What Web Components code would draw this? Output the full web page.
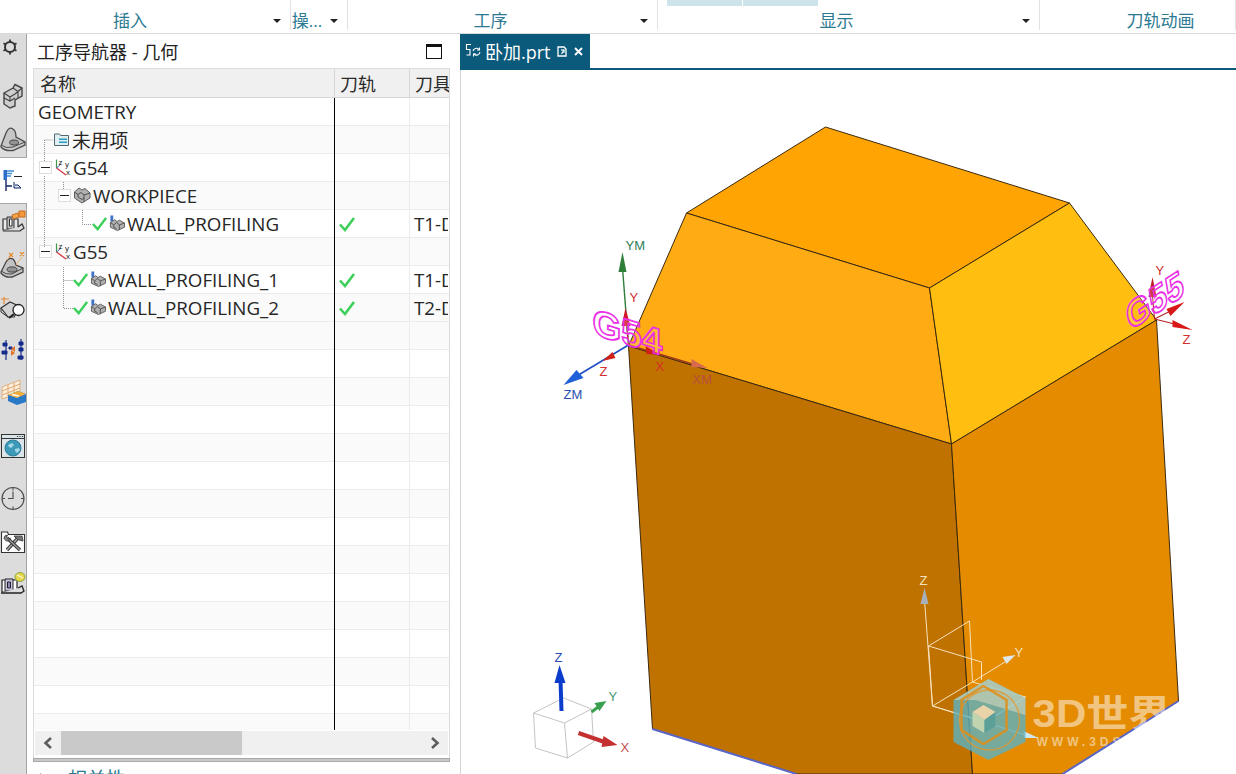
<!DOCTYPE html>
<html lang="zh">
<head>
<meta charset="utf-8">
<title>NX</title>
<style>
html, body { margin: 0; padding: 0; height: 100%; overflow: hidden; background: #fff; }
body { font-family: "Open Sans", "Noto Sans CJK SC", sans-serif; }
</style>
</head>
<body>
<nx-app>
    <nx-ribbon slot="ribbon">
        <nx-ribbon-group width="291" shift="-30" arrow>插入</nx-ribbon-group>
        <nx-ribbon-group width="57" shift="-24" arrow>操...</nx-ribbon-group>
        <nx-ribbon-group width="310" shift="-24" arrow>工序</nx-ribbon-group>
        <nx-ribbon-group width="382" shift="-24" arrow>
            <nx-gallery-chip slot="gallery"></nx-gallery-chip>
            <nx-gallery-chip slot="gallery"></nx-gallery-chip>
            显示
        </nx-ribbon-group>
        <nx-ribbon-group width="196" shift="46">刀轨动画</nx-ribbon-group>
    </nx-ribbon>

    <nx-rail slot="rail">
        <nx-rail-item icon="gear"></nx-rail-item>
        <nx-rail-item icon="solid" gap="23"></nx-rail-item>
        <nx-rail-item icon="bracket" gap="17"></nx-rail-item>
        <nx-rail-item icon="nav" gap="6" selected></nx-rail-item>
        <nx-rail-item icon="machine" gap="6"></nx-rail-item>
        <nx-rail-item icon="partops" gap="17"></nx-rail-item>
        <nx-rail-item icon="magnify" gap="17"></nx-rail-item>
        <nx-rail-item icon="swap" gap="16"></nx-rail-item>
        <nx-rail-item icon="table" gap="16"></nx-rail-item>
        <nx-rail-item icon="globe" gap="28"></nx-rail-item>
        <nx-rail-item icon="clock" gap="27"></nx-rail-item>
        <nx-rail-item icon="tools" gap="17"></nx-rail-item>
        <nx-rail-item icon="machine2" gap="16"></nx-rail-item>
    </nx-rail>

    <nx-navigator slot="panel" heading="工序导航器 - 几何" footer="相关性">
        <nx-row indent="4">GEOMETRY</nx-row>
        <nx-row indent="19" alt><nx-icon name="folder" size="17"></nx-icon>未用项</nx-row>
        <nx-row indent="5"><nx-expander></nx-expander><nx-icon name="csys" size="17"></nx-icon>G54</nx-row>
        <nx-row indent="24" alt><nx-expander></nx-expander><nx-icon name="block" size="18"></nx-icon>WORKPIECE</nx-row>
        <nx-row indent="58"><nx-icon name="check" size="15"></nx-icon><nx-icon name="op" size="16"></nx-icon>WALL_PROFILING<nx-icon slot="path" name="check" size="16"></nx-icon><span slot="tool">T1-D</span></nx-row>
        <nx-row indent="5" alt><nx-expander></nx-expander><nx-icon name="csys" size="17"></nx-icon>G55</nx-row>
        <nx-row indent="39"><nx-icon name="check" size="15"></nx-icon><nx-icon name="op" size="16"></nx-icon>WALL_PROFILING_1<nx-icon slot="path" name="check" size="16"></nx-icon><span slot="tool">T1-D</span></nx-row>
        <nx-row indent="39" alt><nx-icon name="check" size="15"></nx-icon><nx-icon name="op" size="16"></nx-icon>WALL_PROFILING_2<nx-icon slot="path" name="check" size="16"></nx-icon><span slot="tool">T2-D</span></nx-row>
    </nx-navigator>

    <nx-viewport slot="view" title-text="卧加.prt"></nx-viewport>
</nx-app>

<script>
const ICONS = {
    check: '<svg viewBox="0 0 16 16"><path d="M1 8.5 L6 14 L15 2" fill="none" stroke="#3ccf5a" stroke-width="2.6"/></svg>',
    folder: '<svg viewBox="0 0 17 17"><path d="M1.5 3h5l1 1.5h8v10h-14z" fill="#dff0f5" stroke="#56666e"/><path d="M6 7.5h8v1.6H6zM6 10.5h8v1.6H6z" fill="#2d9cc2"/></svg>',
    csys: '<svg viewBox="0 0 17 17"><path d="M2.5 0.5 V9" stroke="#3c9a4a" stroke-width="1.2" fill="none"/><path d="M2.5 9 L12 16" stroke="#d8364a" stroke-width="1.3" fill="none"/><path d="M2.5 9 L7 5" stroke="#4060c0" fill="none"/><text x="4.5" y="5.5" font-size="8" font-family="Liberation Sans" fill="#222">z</text><text x="11" y="8" font-size="8" font-family="Liberation Sans" fill="#222">y</text><text x="12" y="15.5" font-size="8" font-family="Liberation Sans" fill="#222">x</text></svg>',
    block: '<svg viewBox="0 0 18 18"><path d="M1.5 6 L6 2 L9 4 L12 2.5 L17 7 V12 L9 17 L1.5 12Z" fill="#b0b0b0" stroke="#5e5e5e"/><path d="M1.5 6 L5 8.5 L8 6.5 L11 9 L17 7 M11 9 V16 M5 8.5 V11 L9 13.5 L11 12" fill="none" stroke="#505050"/></svg>',
    op: '<svg viewBox="0 0 17 17"><path d="M1.5 0.5 h3 v6.5 h-3z" fill="#3f74c8"/><path d="M3 7 v2" stroke="#333"/><path d="M1.5 8 L6 5 L8.5 7 L11 5.5 L16.5 8.5 V13 L9 16.5 L1.5 13Z" fill="#b0b0b0" stroke="#5e5e5e"/><path d="M1.5 8 L5 10.5 L8 8 L11 10.5 L16.5 8.5 M11 10.5 V16 M5 10.5 V13 L8 14.5" fill="none" stroke="#505050"/></svg>',
    gear: '<svg viewBox="0 0 26 26"><g transform="translate(-3 1)" fill="none" stroke="#333"><circle cx="13" cy="12" r="5" stroke-width="2"/><path d="M13 4.5v2.6M13 17v2.6M6.5 8.2l2.3 1.4M17.2 14.4l2.3 1.4M19.5 8.2l-2.3 1.4M8.8 14.4l-2.3 1.4" stroke-width="1.8"/></g></svg>',
    solid: '<svg viewBox="0 0 26 26"><path d="M4 10 L13 5 L15 1.5 L22 5 V13 L15 17 V23 L10 25 L4 21Z" fill="#cfcfcf" stroke="#444" stroke-width="1.4"/><path d="M4 10 L10 14 L15 11 M10 14 V18 M4 15 L10 18 L15 15 M13 5 L18 8.5 L22 5 M18 8.5 V15 M15 11 L18 8.5" fill="none" stroke="#444" stroke-width="1.1"/></svg>',
    bracket: '<svg viewBox="0 0 26 26"><path d="M1 20 L6 7 Q9 0 13 3 Q16 5 16 11 L25 16 V19 L13 24.5 Q5 25.5 1 21Z" fill="#c6c6c6" stroke="#4c4c4c" stroke-width="1.3"/><path d="M1 19 Q6 23 13 21 L25 16" fill="none" stroke="#4c4c4c"/><ellipse cx="14" cy="16.5" rx="4.5" ry="2.5" fill="#929292" stroke="#444"/></svg>',
    nav: '<svg viewBox="0 0 26 26"><path d="M3.5 3h3.5v10H3.5z" fill="#2d6ec8"/><path d="M7 4h7M7 6.5h5M7 9h4" stroke="#3f8fd8" stroke-width="1.4"/><path d="M14 9.5h8" stroke="#222"/><path d="M6 13v11M6 19h6" stroke="#12246a" stroke-width="1.4" fill="none"/><path d="M14 15v6h7l-3-3h-3" fill="#dcecf5" stroke="#12246a"/></svg>',
    machine: '<svg viewBox="0 0 26 26"><path d="M3 10h15v11H3z" fill="#e8e8e8" stroke="#333" stroke-width="1.2"/><path d="M7 8h7v12H7z" fill="#bbb" stroke="#333"/><path d="M9.5 10h2.5v7H9.5z" fill="#fff" stroke="#333"/><path d="M3 22h17l4-3-2-4-4 3" fill="#ddd" stroke="#333" stroke-width="1.2"/><path d="M12 6l6-2 1 4-6 2z" fill="#f3a64b" stroke="#c96b1a"/><path d="M19 2h6v6h-6z" fill="#f49a3a" stroke="#c96b1a"/></svg>',
    partops: '<svg viewBox="0 0 26 26"><path d="M1 20 L6 10 Q9 5 13 7 Q15 9 16 13 L23 16 V20 L12 25 Q5 26 1 21Z" fill="#c4c4c4" stroke="#444" stroke-width="1.3"/><path d="M1 19 Q6 23 12 22 L23 16" fill="none" stroke="#444"/><ellipse cx="12" cy="17.5" rx="5" ry="2.6" fill="#929292" stroke="#444"/><path d="M7 8 L11 3 M16 13 L22 5" stroke="#f0a040" stroke-dasharray="2 1" fill="none"/><path d="M9 1l4 4M13 1l-4 4M20 0l4 4M24 0l-4 4" stroke="#e8892c" stroke-width="1.2"/></svg>',
    magnify: '<svg viewBox="0 0 26 26"><path d="M1 13 L10 7 L21 12 L14 22 L8 22Z" fill="#d2d2d2" stroke="#333" stroke-width="1.2"/><path d="M1 13 V17 L8 22" fill="none" stroke="#333"/><path d="M4 2 V9 M1 4 H9" stroke="#e8892c" stroke-width="1.2"/><circle cx="18.5" cy="15" r="5.5" fill="#fff" stroke="#222" stroke-width="1.3"/><path d="M14 19l-5 4" stroke="#222" stroke-width="2"/></svg>',
    swap: '<svg viewBox="0 0 26 26"><g fill="#142a8c" stroke="#142a8c"><path d="M6 3v20" fill="none" stroke-width="1.2"/><path d="M3 6h4v3H3zM2 14h5v3H2zM9 10h3v2H9z"/><path d="M21 2v12M21 14v9" fill="none" stroke-width="1.2"/><path d="M19 5h4v3h-4zM19 11h4v3h-4zM18 19h5v3h-5z"/></g><path d="M11 12l4-3v6zM15 16l-4 3v-6z" fill="#e2742a"/></svg>',
    table: '<svg viewBox="0 0 26 26"><path d="M2 8 L20 1 V14 L2 20Z" fill="#fbeedb" stroke="#e0b080"/><path d="M2 12 L20 5 M2 16 L20 9 M8 6 V18 M14 3.5 V16" stroke="#e0a870" fill="none"/><path d="M8 16 L18 12 L26 15 V23 L17 26 L8 22Z" fill="#2a78c8"/><path d="M8 16 L18 12 L26 15 L17 19Z" fill="#f4ac3a"/><path d="M12 15.5l7 1.5" stroke="#fff" stroke-width="1.4"/></svg>',
    globe: '<svg viewBox="0 0 26 26"><rect x="1.5" y="1.5" width="23" height="23" fill="#dbe4e8" stroke="#333"/><path d="M1.5 5.5h23" stroke="#333"/><path d="M17 3.5h1.2M19.5 3.5h1.2M22 3.5h1.2" stroke="#333"/><circle cx="13" cy="15" r="8" fill="#3d9ab8" stroke="#2b7d9c"/><path d="M8 12l4-2 2 2-3 3-2-1zM15 16l4-1 1 2-3 3-2-2z" fill="#a5d8e6"/></svg>',
    clock: '<svg viewBox="0 0 26 26"><circle cx="13" cy="12.5" r="11" fill="none" stroke="#4a4a4a" stroke-width="1.1"/><path d="M13 1.5v3M13 20.5v3M2 12.5h3M21 12.5h3M13 5.5v7H8" fill="none" stroke="#4a4a4a" stroke-width="1.1"/></svg>',
    tools: '<svg viewBox="0 0 26 26"><path d="M1.5 3h6l1 2.5h16v18h-23z" fill="#fff" stroke="#333" stroke-width="1.1"/><path d="M7 21 L18 9" stroke="#333" stroke-width="3.4"/><path d="M7 21 L18 9" stroke="#aaa" stroke-width="1.6"/><path d="M7 9 L20 21" stroke="#333" stroke-width="3.4"/><path d="M7 9 L20 21" stroke="#999" stroke-width="1.6"/><path d="M14 7 L22 7 L23 12 L19 11 L17 10z" fill="#777" stroke="#333" stroke-width=".8"/><path d="M4 9.5a3.5 3.5 0 0 1 3.5-3.5l-1 2.5 2 1.5 1.8-1a3.5 3.5 0 0 1-4 3z" fill="#888" stroke="#333" stroke-width=".8"/></svg>',
    machine2: '<svg viewBox="0 0 26 26"><path d="M2 9h15v12H2z" fill="#fff" stroke="#222" stroke-width="1.2"/><path d="M5 8h8v12H5z" fill="#c8c4e0" stroke="#222"/><path d="M7.5 11h3v6h-3z" fill="#8f88b8" stroke="#222"/><path d="M1 22h20l3-2-2-5-4 2" fill="#ddd" stroke="#222" stroke-width="1.3"/><ellipse cx="20" cy="6" rx="5" ry="4.5" fill="#e7d84c" stroke="#8fa83a"/><path d="M17 4l6 3" stroke="#fff"/></svg>'
};

const appTemplate = document.createElement('template');
appTemplate.innerHTML = `
<style>
:host { display: grid; grid-template-columns: 27px 433px 1fr; grid-template-rows: 34px 1fr; height: 100vh; overflow: hidden; }
#ribbon { grid-column: 1 / 4; }
#panel, #view, #rail { display: block; min-height: 0; min-width: 0; }
</style>
<div id="ribbon"><slot name="ribbon"></slot></div>
<div id="rail"><slot name="rail"></slot></div>
<div id="panel"><slot name="panel"></slot></div>
<div id="view"><slot name="view"></slot></div>
`;
class NxApp extends HTMLElement {
    constructor() {
        super();
        this.attachShadow({mode: 'open'});
        this.shadowRoot.appendChild(appTemplate.content.cloneNode(true));
    }
}

const ribbonTemplate = document.createElement('template');
ribbonTemplate.innerHTML = `
<style>
:host { display: flex; height: 34px; box-sizing: border-box; border-bottom: 1px solid #d9d9d9; background: #fff; overflow: hidden; }
</style>
<slot></slot>
`;
class NxRibbon extends HTMLElement {
    constructor() {
        super();
        this.attachShadow({mode: 'open'});
        this.shadowRoot.appendChild(ribbonTemplate.content.cloneNode(true));
    }
}

const groupTemplate = document.createElement('template');
groupTemplate.innerHTML = `
<style>
:host { display: grid; grid-template-rows: 6px 24px; flex: none; box-sizing: border-box; border-right: 1px solid #e2e2e2; height: 30px; position: relative; font-size: 17px; color: #2b7a92; }
#gallery { display: flex; gap: 1px; padding-left: 9px; }
#row { display: flex; align-items: center; justify-content: center; white-space: nowrap; padding-top: 6px; box-sizing: border-box; line-height: 20px; }
#arrow { position: absolute; right: 9px; top: 19px; width: 0; height: 0; border: 4px solid transparent; border-top: 4px solid #222; border-bottom: 0; }
</style>
<div id="gallery"><slot name="gallery"></slot></div>
<div id="row"><slot></slot></div>
<div id="arrow"></div>
`;
class NxRibbonGroup extends HTMLElement {
    constructor() {
        super();
        this.attachShadow({mode: 'open'});
        this.shadowRoot.appendChild(groupTemplate.content.cloneNode(true));
    }
    connectedCallback() {
        this.style.width = this.getAttribute('width') + 'px';
        const shift = Number(this.getAttribute('shift') || 0);
        const row = this.shadowRoot.getElementById('row');
        if (shift < 0) row.style.paddingRight = (-shift) + 'px';
        else row.style.paddingLeft = shift + 'px';
        if (!this.hasAttribute('arrow')) this.shadowRoot.getElementById('arrow').remove();
    }
}

const chipTemplate = document.createElement('template');
chipTemplate.innerHTML = `<style>:host { display: block; width: 75px; height: 6px; background: #cde4ea; }</style>`;
class NxGalleryChip extends HTMLElement {
    constructor() {
        super();
        this.attachShadow({mode: 'open'});
        this.shadowRoot.appendChild(chipTemplate.content.cloneNode(true));
    }
}

const railTemplate = document.createElement('template');
railTemplate.innerHTML = `
<style>
:host { display: flex; flex-direction: column; width: 27px; height: 100%; box-sizing: border-box; background: #dcdcdc; border-right: 1px solid #a3a3a3; }
</style>
<slot></slot>
`;
class NxRail extends HTMLElement {
    constructor() {
        super();
        this.attachShadow({mode: 'open'});
        this.shadowRoot.appendChild(railTemplate.content.cloneNode(true));
    }
}

const railItemTemplate = document.createElement('template');
railItemTemplate.innerHTML = `
<style>
:host { display: block; height: 26px; width: 26px; flex: none; }
:host([selected]) { height: 45px; width: 27px; padding-top: 9px; box-sizing: border-box; background: #fff; box-shadow: 0 -1px #a8a8a8, 0 1px #a8a8a8; }
svg { display: block; width: 26px; height: 26px; }
</style>
<div id="glyph"></div>
`;
class NxRailItem extends HTMLElement {
    constructor() {
        super();
        this.attachShadow({mode: 'open'});
        this.shadowRoot.appendChild(railItemTemplate.content.cloneNode(true));
    }
    connectedCallback() {
        this.style.marginTop = (this.getAttribute('gap') || 0) + 'px';
        this.shadowRoot.getElementById('glyph').innerHTML = ICONS[this.getAttribute('icon')];
    }
}

const iconTemplate = document.createElement('template');
iconTemplate.innerHTML = `
<style>
:host { display: inline-block; flex: none; line-height: 0; }
svg { display: block; width: 100%; height: 100%; }
</style>
<div id="glyph" style="width:100%;height:100%"></div>
`;
class NxIcon extends HTMLElement {
    constructor() {
        super();
        this.attachShadow({mode: 'open'});
        this.shadowRoot.appendChild(iconTemplate.content.cloneNode(true));
    }
    connectedCallback() {
        const size = this.getAttribute('size') + 'px';
        this.style.width = size;
        this.style.height = size;
        this.shadowRoot.getElementById('glyph').innerHTML = ICONS[this.getAttribute('name')];
    }
}

const expanderTemplate = document.createElement('template');
expanderTemplate.innerHTML = `
<style>
:host { display: flex; align-items: center; justify-content: center; flex: none; width: 13px; height: 13px; box-sizing: border-box; border: 1px solid #dedede; background: #fff; }
i { display: block; width: 9px; height: 1px; background: #222; }
</style>
<i></i>
`;
class NxExpander extends HTMLElement {
    constructor() {
        super();
        this.attachShadow({mode: 'open'});
        this.shadowRoot.appendChild(expanderTemplate.content.cloneNode(true));
    }
}

const rowTemplate = document.createElement('template');
rowTemplate.innerHTML = `
<style>
:host { display: grid; grid-template-columns: 301px 75px 1fr; height: 28px; box-shadow: inset 0 -1px #ececec; font-size: 18.75px; color: #262626; }
:host([alt]) { background: #fafafa; }
.cell { display: flex; align-items: center; box-sizing: border-box; height: 28px; white-space: nowrap; overflow: hidden; padding-bottom: 2px; }
#name { gap: 2px; border-right: 1px solid #000; }
#path { padding-left: 4px; border-right: 1px solid #ececec; padding-bottom: 0; }
#tool { padding-left: 4px; margin-right: 1px; }
</style>
<div class="cell" id="name"><slot></slot></div>
<div class="cell" id="path"><slot name="path"></slot></div>
<div class="cell" id="tool"><slot name="tool"></slot></div>
`;
class NxRow extends HTMLElement {
    constructor() {
        super();
        this.attachShadow({mode: 'open'});
        this.shadowRoot.appendChild(rowTemplate.content.cloneNode(true));
    }
    connectedCallback() {
        this.shadowRoot.getElementById('name').style.paddingLeft = (this.getAttribute('indent') || 0) + 'px';
    }
}

const navigatorTemplate = document.createElement('template');
navigatorTemplate.innerHTML = `
<style>
:host { display: flex; flex-direction: column; height: 100%; box-sizing: border-box; padding: 0 10px 0 6px; background: #fff; overflow: hidden; }
#title { display: flex; align-items: center; justify-content: space-between; flex: none; height: 34px; padding: 0 8px 0 4px; font-size: 18px; color: #222; }
#max { width: 16px; height: 15px; box-sizing: border-box; border: 1px solid #111; border-top-width: 3px; }
#table { flex: none; border: 1px solid #dcdcdc; border-bottom: 0; }
#head { display: grid; grid-template-columns: 301px 75px 1fr; height: 29px; box-sizing: border-box; background: #f0f0f0; border-bottom: 1px solid #d8d8d8; font-size: 18px; color: #2b2b2b; }
#head div { display: flex; align-items: center; padding-left: 6px; box-sizing: border-box; border-right: 1px solid #d8d8d8; overflow: hidden; white-space: nowrap; }
#head div:last-child { border-right: 0; padding-left: 5px; }
#rows { position: relative; height: 632px; overflow: hidden; }
#lines { position: absolute; left: 0; top: 0; width: 300px; height: 632px; pointer-events: none; }
#pad { height: 1px; }
#bottom { height: 3px; }
#sash { flex: none; height: 4px; margin: 0; box-sizing: border-box; background: #c9c9c9; border: 1px solid #a9a9a9; }
#footer { display: flex; gap: 16px; flex: none; height: 30px; padding: 0 0 0 7px; margin-top: 2px; font-size: 19px; line-height: 30px; color: #2b7a92; align-items: flex-start; }
#tri { width: 0; height: 0; margin-top: 9px; border: 5px solid transparent; border-left: 7px solid #6a8a98; }
</style>
<div id="title"><span id="heading"></span><div id="max"></div></div>
<div id="table">
    <div id="head"><div>名称</div><div style="padding-left:5px">刀轨</div><div>刀具</div></div>
    <div id="rows">
        <slot></slot>
        <div id="fill"></div>
        <svg id="lines" viewBox="34 98 300 632" fill="none" stroke="#8f8f8f" stroke-dasharray="1 1">
            <path d="M44.5 140V162M44.5 140H53M44.5 176V248M63.5 182V190M82.5 210V224.5H92M63.5 267V308.5H73M63.5 280.5H73"/>
        </svg>
    </div>
    <div id="pad"></div>
    <nx-scrollbar></nx-scrollbar>
    <div id="bottom"></div>
</div>
<div id="sash"></div>
<div id="footer"><div id="tri"></div><span id="foot"></span></div>
`;
class NxNavigator extends HTMLElement {
    constructor() {
        super();
        this.attachShadow({mode: 'open'});
        this.shadowRoot.appendChild(navigatorTemplate.content.cloneNode(true));
    }
    connectedCallback() {
        this.shadowRoot.getElementById('heading').textContent = this.getAttribute('heading');
        this.shadowRoot.getElementById('foot').textContent = this.getAttribute('footer');
        const fill = this.shadowRoot.getElementById('fill');
        for (let i = 0; i < 15; i++) {
            const row = document.createElement('nx-row');
            if (i % 2 === 0) row.setAttribute('alt', '');
            fill.appendChild(row);
        }
    }
}

const scrollbarTemplate = document.createElement('template');
scrollbarTemplate.innerHTML = `
<style>
:host { display: flex; align-items: stretch; height: 24px; margin: 0 1px; background: #f0f0f0; }
.btn { display: flex; align-items: center; justify-content: center; flex: none; width: 26px; }
.btn svg { width: 12px; height: 14px; }
#thumb { flex: none; width: 181px; background: #c9c9c9; }
#rest { flex: 1; }
</style>
<div class="btn"><svg viewBox="0 0 12 14"><path d="M9 2 L3.5 7 L9 12" fill="none" stroke="#5e5e5e" stroke-width="2.6"/></svg></div>
<div id="thumb"></div>
<div id="rest"></div>
<div class="btn"><svg viewBox="0 0 12 14"><path d="M3 2 L8.5 7 L3 12" fill="none" stroke="#5e5e5e" stroke-width="2.6"/></svg></div>
`;
class NxScrollbar extends HTMLElement {
    constructor() {
        super();
        this.attachShadow({mode: 'open'});
        this.shadowRoot.appendChild(scrollbarTemplate.content.cloneNode(true));
    }
}

const viewportTemplate = document.createElement('template');
viewportTemplate.innerHTML = `
<style>
:host { display: flex; flex-direction: column; height: 100%; background: #fff; overflow: hidden; }
#bar { flex: none; height: 36px; box-sizing: border-box; border-bottom: 2px solid #0b5a7c; }
#tab { display: flex; align-items: center; width: 130px; height: 34px; box-sizing: border-box; padding-left: 5px; background: #0b5a7c; color: #fff; font-size: 18px; }
#tab svg { flex: none; display: block; }
#name { margin: 0 6px 0 3px; white-space: nowrap; }
#stage { flex: 1; min-height: 0; border-left: 1px solid #d4d4d4; }
nx-model { height: 100%; }
</style>
<div id="bar">
    <div id="tab">
        <svg width="17" height="18" viewBox="0 0 17 18" fill="none" stroke="#fff" stroke-width="1.1">
            <path d="M6 2.5H1.5V7.5H5V13H1.5"/>
            <path d="M8 9a3.5 3.5 0 0 1 6-1.5M15 10a3.5 3.5 0 0 1-6 2"/>
            <path d="M14.5 5.5v2.5h-2.5M8.5 14.5v-2.5h2.5"/>
        </svg>
        <span id="name"></span>
        <svg width="11" height="11" viewBox="0 0 11 11" fill="none" stroke="#fff" stroke-width="1.3"><path d="M1 1h6l2 2v7H1z"/><path d="M4 4h3v3" stroke="#cfe4ec"/><path d="M7 4L4.5 8" stroke="#fff"/></svg>
        <svg width="9" height="9" viewBox="0 0 9 9" style="margin-left:6px" stroke="#fff" stroke-width="1.9"><path d="M1 1L8 8M8 1L1 8"/></svg>
    </div>
</div>
<div id="stage"><nx-model></nx-model></div>
`;
class NxViewport extends HTMLElement {
    constructor() {
        super();
        this.attachShadow({mode: 'open'});
        this.shadowRoot.appendChild(viewportTemplate.content.cloneNode(true));
    }
    connectedCallback() {
        this.shadowRoot.getElementById('name').textContent = this.getAttribute('title-text');
    }
}

const modelTemplate = document.createElement('template');
modelTemplate.innerHTML = `
<style>
:host { display: block; overflow: hidden; }
svg { display: block; }
text { font-family: "Liberation Sans", sans-serif; font-size: 13px; }
.face { stroke: #3b2a10; stroke-width: 1; stroke-linejoin: round; }
.tag { font-size: 37px; font-weight: bold; fill: rgba(255,255,255,.18); stroke: #ea2fe6; stroke-width: 1.7; }
.wire { fill: none; stroke: #f6e2bd; stroke-width: 1; }
</style>
<svg width="776" height="704" viewBox="461 70 775 704">
    <polygon class="face" fill="#ffa402" points="825,127 1069,203 929,288 686,213"/>
    <polygon class="face" fill="#ffab14" points="686,213 929,288 951,444 628,346"/>
    <polygon class="face" fill="#ffbe10" points="929,288 1069,203 1156,320 951,444"/>
    <polygon class="face" fill="#bf7200" points="628,346 951,444 972,774 796,774 652,729"/>
    <polygon class="face" fill="#e48b00" points="951,444 1156,320 1178,701 1062,774 972,774"/>
    <path d="M652 729L796 774M1178 701L1062 774" stroke="#5a66c8" stroke-width="2" fill="none"/>

    <!-- G54 csys -->
    <path d="M628 345L622 268" stroke="#2f7d3a" stroke-width="1.4"/>
    <polygon points="622,252 618,272 626,272" fill="#2f7d3a"/>
    <path d="M628 345L578 375" stroke="#1f4fc4" stroke-width="1.6"/>
    <polygon points="563,385 576,370 583,378" fill="#1f5fd8"/>
    <path d="M628 345L692 364" stroke="#a03a18" stroke-width="1.6"/>
    <polygon points="707,368 691,359 691,367" fill="#d86a50"/>
    <polygon points="660,355 645,346 646,354" fill="#d02018"/>
    <polygon points="602,361 612,352 615,358" fill="#d02018"/>
    <polygon points="625,308 621,326 630,326" fill="#d01828"/>
    <path d="M626 325L628 345" stroke="#c02020" stroke-width="1.2"/>
    <text x="625" y="250" fill="#2f7d5a">YM</text>
    <text x="629" y="302" fill="#d03030">Y</text>
    <text x="563" y="399" fill="#2b4fb0">ZM</text>
    <text x="599" y="376" fill="#d03030">Z</text>
    <text x="655" y="371" fill="#d83028">X</text>
    <text x="692" y="384" fill="#b8503c">XM</text>
    <text class="tag" transform="matrix(1,.31,0,1,592,334)">G54</text>

    <!-- G55 csys -->
    <path d="M1154 319L1152 296M1154 319L1174 324M1154 319L1170 311" stroke="#b02020" stroke-width="1.1"/>
    <polygon points="1152,277 1148,297 1156,297" fill="#c01c20"/>
    <polygon points="1192,330 1172,320 1172,327" fill="#d81818"/>
    <polygon points="1184,302 1166,309 1170,316" fill="#d81818"/>
    <text x="1155" y="275" fill="#d03030">Y</text>
    <text x="1182" y="344" fill="#d03030">Z</text>
    <text class="tag" transform="matrix(.8,-.52,.22,.98,1129,331)">G55</text>

    <!-- view triad -->
    <path d="M533 713L563 698L591 709L564 723ZM533 713L535 748L567 758L593 742L591 709M564 723L567 758" fill="none" stroke="#c4c4c4"/>
    <path d="M561 711L560 680" stroke="#0b3ccc" stroke-width="4"/>
    <polygon points="559,665 554,683 565,683" fill="#0b3ccc"/>
    <path d="M591 712L599 706" stroke="#3aa050" stroke-width="3"/>
    <polygon points="606,701 594,703 599,711" fill="#3aa050"/>
    <path d="M578 733L604 742" stroke="#c43030" stroke-width="4"/>
    <polygon points="617,745 603,736 601,747" fill="#c43030"/>
    <text x="554" y="662" fill="#2b4fb0">Z</text>
    <text x="608" y="701" fill="#3f9a78">Y</text>
    <text x="620" y="752" fill="#c85050">X</text>

    <!-- work csys -->
    <path class="wire" d="M928 646L969 621L972 682M928 646L981 662V680M928 646L932 706L972 682L1025 697L985 722L932 706M985 722L1025 697"/>
    <path class="wire" d="M924 600L932 706M972 682L1006 661M932 706L1025 735"/>
    <polygon points="924,588 920,604 928,604" fill="#a6b0bc"/>
    <polygon points="1015,655 1002,657 1006,664" fill="#dfe6ea"/>
    <polygon points="1038,738 1023,731 1024,738" fill="#cfe8f0"/>
    <text x="919" y="585" fill="#f6e2bd">Z</text>
    <text x="1014" y="657" fill="#f6e2bd">Y</text>

    <!-- watermark -->
    <polygon points="988,679 1025,698 1025,742 988,760 953,742 953,700" fill="rgba(90,180,200,.78)"/>
    <path d="M988 679L1025 698V715L975 700L953 700Z" fill="rgba(255,235,205,.4)"/>
    <circle cx="989" cy="720" r="30" fill="none" stroke="rgba(230,150,40,.8)" stroke-width="1.3"/>
    <polygon points="983,686 1006,700 1006,730 983,744 961,730 961,700" fill="none" stroke="rgba(224,142,24,.85)" stroke-width="2.6"/>
    <polygon points="972,712 983,705 995,712 984,720" fill="#e8d4a8"/>
    <polygon points="972,712 984,720 984,733 972,726" fill="#c0d4b0"/>
    <polygon points="995,712 984,720 984,733 995,726" fill="#5a9f98"/>
    <text x="1032" y="727" style="font-size:38px;font-weight:bold;font-family:'Liberation Sans','Noto Sans CJK SC',sans-serif" fill="rgba(255,255,255,.52)" textLength="138" lengthAdjust="spacingAndGlyphs">3D世界</text>
    <text x="1036" y="746" style="font-size:12px;font-weight:bold;letter-spacing:4px" fill="rgba(255,255,255,.5)">WWW.3DSJW.COM</text>
</svg>
`;
class NxModel extends HTMLElement {
    constructor() {
        super();
        this.attachShadow({mode: 'open'});
        this.shadowRoot.appendChild(modelTemplate.content.cloneNode(true));
    }
}

window.customElements.define('nx-app', NxApp);
window.customElements.define('nx-ribbon', NxRibbon);
window.customElements.define('nx-ribbon-group', NxRibbonGroup);
window.customElements.define('nx-gallery-chip', NxGalleryChip);
window.customElements.define('nx-rail', NxRail);
window.customElements.define('nx-rail-item', NxRailItem);
window.customElements.define('nx-icon', NxIcon);
window.customElements.define('nx-expander', NxExpander);
window.customElements.define('nx-row', NxRow);
window.customElements.define('nx-navigator', NxNavigator);
window.customElements.define('nx-scrollbar', NxScrollbar);
window.customElements.define('nx-viewport', NxViewport);
window.customElements.define('nx-model', NxModel);
</script>
</body>
</html>
